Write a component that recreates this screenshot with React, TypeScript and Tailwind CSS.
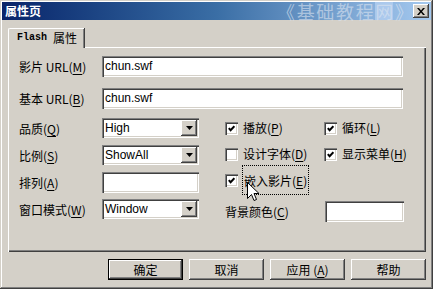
import React from "react";

const cjk = "font-['SimSun','Noto_Sans_CJK_SC',sans-serif]";
const raised =
  "shadow-[inset_-1px_-1px_0_#404040,inset_1px_1px_0_#ffffff,inset_-2px_-2px_0_#808080,inset_2px_2px_0_#d4d0c8]";
const sunken =
  "shadow-[inset_1px_1px_0_#808080,inset_2px_2px_0_#404040,inset_-1px_-1px_0_#ffffff,inset_-2px_-2px_0_#d4d0c8]";

function Label({ text, k, tail = "" }: { text: string; k: string; tail?: string }) {
  return (
    <span className={`${cjk} text-[12px] leading-none text-black whitespace-pre`}>
      {text}(<span className="underline underline-offset-2">{k}</span>){tail}
    </span>
  );
}

function TextBox({ value = "", className = "" }: { value?: string; className?: string }) {
  return (
    <div className={`bg-white ${sunken} h-[21px] flex items-center pl-[3px] ${className}`}>
      <span className="font-['Liberation_Sans',sans-serif] text-[12px] text-black leading-none">{value}</span>
    </div>
  );
}

function Select({ value }: { value: string }) {
  return (
    <div className={`bg-white ${sunken} w-[97px] h-[20px] flex items-center p-[2px]`}>
      <span className="flex-1 pl-[1px] font-['Liberation_Sans',sans-serif] text-[12px] text-black leading-none">{value}</span>
      <div className={`w-[16px] h-[16px] bg-[#d4d0c8] ${raised} flex items-center justify-center`}>
        <svg width="7" height="4" viewBox="0 0 7 4">
          <path d="M0 0H7L3.5 4Z" fill="#000" />
        </svg>
      </div>
    </div>
  );
}

function Check({ on, children }: { on: boolean; children: React.ReactNode }) {
  return (
    <div className="flex items-center h-[20px] gap-[5px]">
      <div className={`w-[13px] h-[13px] bg-white ${sunken} flex items-center justify-center shrink-0`}>
        {on && (
          <svg width="7" height="7" viewBox="0 0 7 7">
            <path d="M0.8 3.2L2.6 5.2L6.4 1.2" fill="none" stroke="#000" strokeWidth="2" />
          </svg>
        )}
      </div>
      {children}
    </div>
  );
}

function Button({ children, def = false }: { children: React.ReactNode; def?: boolean }) {
  return (
    <div className={`w-[75px] h-[21px] ${def ? "border border-black" : ""} bg-[#d4d0c8]`}>
      <div className={`w-full h-full ${raised} flex items-center justify-center ${cjk} text-[12px] text-black leading-none`}>
        {children}
      </div>
    </div>
  );
}

const mark = ["《", "基", "础", "教", "程", "网", "》"];

export default function App() {
  return (
    <div className="w-[433px] h-[289px] bg-[#d4d0c8] p-[2px] flex flex-col relative shadow-[inset_-1px_-1px_0_#404040,inset_1px_1px_0_#d4d0c8,inset_-2px_-2px_0_#808080,inset_2px_2px_0_#ffffff] overflow-hidden">
      {/* title bar */}
      <div className="h-[18px] flex items-center bg-gradient-to-r from-[#0a246a] via-[#3a6ea5] to-[#a6caf0] relative">
        <span className={`${cjk} ml-[3px] text-[12px] font-bold text-white leading-none`}>属性页</span>
        {/* watermark */}
        <div className="absolute right-[18px] top-0 h-[18px] w-[136px] flex items-center justify-between font-['Noto_Sans_CJK_SC',sans-serif] text-[18px] leading-[18px] text-[#dce4f0]/60">
          {mark.map((c, i) => (
            <span key={i} className={c === "网" ? "bg-[#b8d2f2]/70" : ""}>
              {c}
            </span>
          ))}
        </div>
        <div className={`ml-auto mr-[2px] w-[16px] h-[14px] bg-[#d4d0c8] ${raised} flex items-center justify-center relative`}>
          <svg width="8" height="7" viewBox="0 0 8 7">
            <path d="M0 0h2l2 2.5L6 0h2L5 3.5 8 7H6L4 4.5 2 7H0l3-3.5Z" fill="#000" />
          </svg>
        </div>
      </div>

      {/* tab + panel */}
      <div className="mt-[8px] ml-[6px] mr-[5px] flex flex-col">
        <div className="flex">
          <div className="relative z-10 -mb-px w-[76px] h-[20px] bg-[#d4d0c8] border-t border-l border-white rounded-tl-[2px] shadow-[inset_-1px_0_0_#808080,1px_0_0_#404040] flex items-center pl-[8px] pb-[1px]">
            <span className="font-['Liberation_Mono',monospace] text-[10px] font-bold text-black leading-none">Flash</span>
            <span className={`${cjk} ml-[6px] text-[12px] text-black leading-none`}>属性</span>
          </div>
        </div>
        <div className="h-[205px] border-t border-l border-white shadow-[inset_-1px_-1px_0_#404040,inset_-2px_-2px_0_#808080] pl-[10px] pt-[6px] flex flex-col">
          <div className="flex items-center">
            <div className="w-[83px]"><Label text="影片 URL" k="M" /></div>
            <TextBox value="chun.swf" className="w-[301px]" />
          </div>
          <div className="flex items-center mt-[8px]">
            <div className="w-[83px]"><Label text="基本 URL" k="B" /></div>
            <TextBox value="chun.swf" className="w-[301px]" />
          </div>
          <div className="flex mt-[8px]">
            <div className="flex flex-col gap-[7px] w-[206px]">
              <div className="flex items-center h-[20px]">
                <div className="w-[83px]"><Label text="品质" k="Q" /></div>
                <Select value="High" />
              </div>
              <div className="flex items-center h-[20px]">
                <div className="w-[83px]"><Label text="比例" k="S" /></div>
                <Select value="ShowAll" />
              </div>
              <div className="flex items-center h-[20px]">
                <div className="w-[83px]"><Label text="排列" k="A" /></div>
                <TextBox className="w-[97px] h-[20px]" />
              </div>
              <div className="flex items-center h-[20px]">
                <div className="w-[83px]"><Label text="窗口模式" k="W" /></div>
                <Select value="Window" />
              </div>
            </div>
            <div className="flex flex-col">
              <div className="grid grid-cols-[99px_1fr] gap-y-[6px]">
                <Check on><Label text="播放" k="P" /></Check>
                <Check on><Label text="循环" k="L" /></Check>
                <Check on={false}><Label text="设计字体" k="D" /></Check>
                <Check on><Label text="显示菜单" k="H" /></Check>
                <Check on>
                  <span className="-ml-[1px] px-[1px] py-[2px] border border-dotted border-black">
                    <Label text="嵌入影片" k="E" />
                  </span>
                </Check>
              </div>
              <div className="flex items-center mt-[9px]">
                <div className="w-[100px]"><Label text="背景颜色" k="C" /></div>
                <TextBox className="w-[79px]" />
              </div>
            </div>
          </div>
        </div>
      </div>

      {/* buttons */}
      <div className="mt-[7px] mr-[5px] flex justify-end gap-[6px]">
        <Button def>确定</Button>
        <Button>取消</Button>
        <Button>
          应用 (<span className="underline underline-offset-2">A</span>)
        </Button>
        <Button>帮助</Button>
      </div>

      {/* mouse pointer */}
      <svg className="absolute left-[247px] top-[182px]" width="12" height="19" viewBox="0 0 12 19">
        <path d="M0.5 0.5V16.5L4.5 12.5L7 18.5L9.5 17.5L7 11.5H12L0.5 0.5Z" fill="#fff" stroke="#000" strokeWidth="1" />
      </svg>
    </div>
  );
}
